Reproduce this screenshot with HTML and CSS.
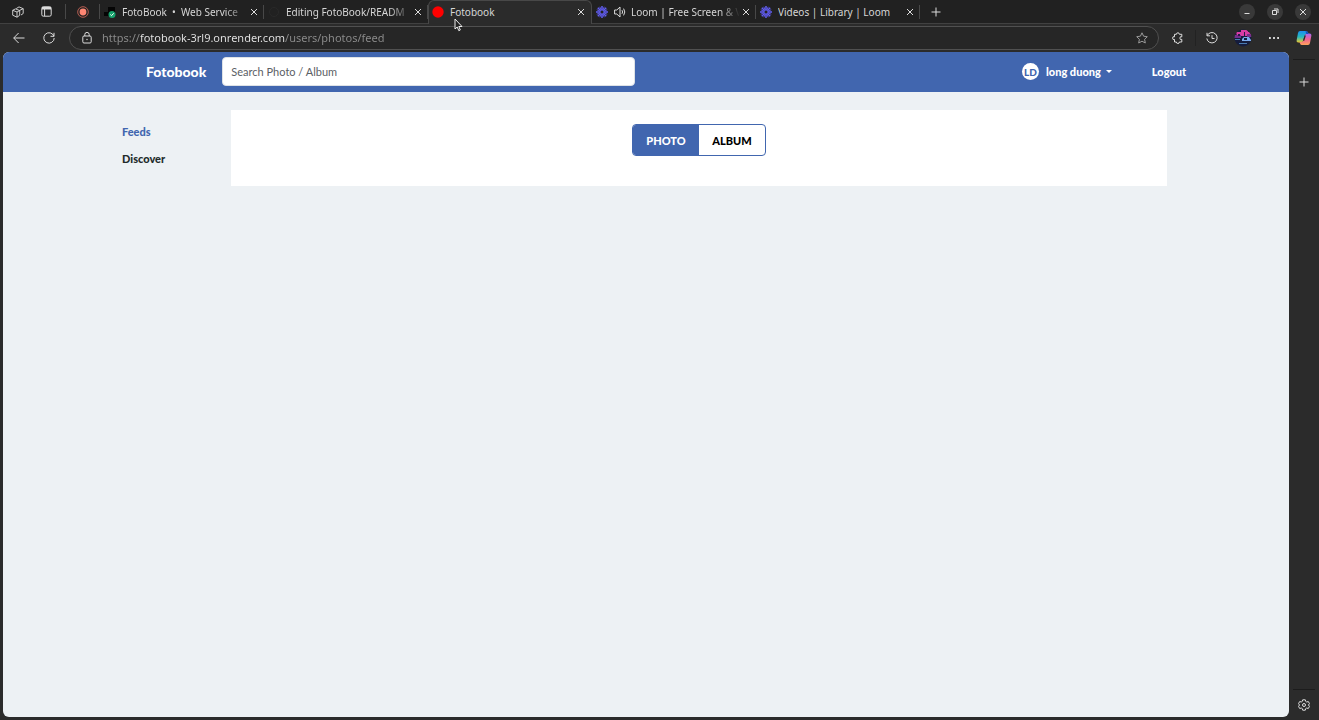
FILE: index.html
```html
<!DOCTYPE html>
<html lang="en">
<head>
<meta charset="utf-8">
<meta name="viewport" content="width=device-width, initial-scale=1">
<title>Fotobook</title>
<link rel="stylesheet" href="styles.css">
</head>
<body>
<svg class="defs" aria-hidden="true">
  <symbol id="close" viewBox="0 0 8 8"><path d="M1 1l6 6M7 1L1 7"/></symbol>
  <symbol id="plus" viewBox="0 0 10 10"><path d="M5 .5v9M.5 5h9"/></symbol>
  <symbol id="loom" viewBox="0 0 12 12">
    <path stroke="#625df5" stroke-width="1.500" d="M6 0v12M0 6h12M1.800 1.800l8.400 8.400M10.200 1.800l-8.400 8.400"/>
    <path stroke="#625df5" stroke-width=".9" d="M3.800.8l4.400 10.400M8.200.8L3.800 11.200M.8 3.800l10.400 4.400M.8 8.200l10.400-4.400"/>
    <circle cx="6" cy="6" r="2" fill="#242424" stroke="#625df5" stroke-width=".8"/>
  </symbol>
</svg>
<div class="browser">
  <header class="tabstrip">
    <div class="tools">
      <button class="icon-btn" aria-label="Workspaces"><svg width="12" height="12" viewBox="0 0 12 12" stroke-width=".9"><path d="M4.200 2.600L7 .9l4.200 1.800v4.800L9 9M.7 4.300l2.700-1.400 4.300 1.600v4.800L5 11.200.7 9.200zM.7 4.300L5 6l2.700-1.500M5 6v5.200M7.500 4.400l3.700-1.700"/></svg></button>
      <button class="icon-btn" aria-label="Tab actions"><svg width="11" height="11" viewBox="0 0 11 11"><rect x=".8" y=".8" width="9.400" height="9.400" rx="1.500"/><path d="M1 2.200h9" stroke-width="2.600"/><path d="M3.600 3v7"/></svg></button>
    </div>
    <button class="pinned" aria-label="Recording"><svg width="12" height="12" viewBox="0 0 12 12"><circle cx="6" cy="6" r="5.300" stroke="#d96c5e" stroke-width=".8"/><circle cx="6" cy="6" r="3.400" fill="#ff8673" stroke="none"/></svg></button>
    <div class="tab">
      <svg class="favicon" width="12" height="12" viewBox="0 0 12 12" stroke="none"><path d="M0 6h4V1h7v6L8 10H0z" fill="#050505"/><circle cx="8" cy="8.500" r="3.500" fill="#15a06b"/><path d="M6.300 8.500l1.200 1.200 2.200-2.400" fill="none" stroke="#fff"/></svg>
      <span class="title fade">FotoBook &nbsp;•&nbsp; Web Service</span>
      <button class="close" aria-label="Close tab"><svg width="8" height="8"><use href="#close"/></svg></button>
    </div>
    <div class="tab">
      <svg class="favicon" width="12" height="12" viewBox="0 0 12 12"><circle cx="6" cy="6" r="4.500" stroke="#292929"/></svg>
      <span class="title fade">Editing FotoBook/READM</span>
      <button class="close" aria-label="Close tab"><svg width="8" height="8"><use href="#close"/></svg></button>
    </div>
    <div class="tab active">
      <svg class="favicon" width="12" height="12" viewBox="0 0 12 12"><circle cx="6" cy="6" r="5.700" fill="red" stroke="none"/></svg>
      <span class="title">Fotobook</span>
      <button class="close" aria-label="Close tab"><svg width="8" height="8"><use href="#close"/></svg></button>
    </div>
    <div class="tab">
      <svg class="favicon" width="12" height="12"><use href="#loom"/></svg>
      <svg class="sound" width="12" height="12" viewBox="0 0 12 12"><path d="M.6 4h2.200L6 1v10L2.800 8H.6zM8 4.200q1.200 1.800 0 3.600M9.600 2.600q2.400 3.400 0 6.800"/></svg>
      <span class="title fade">Loom | Free Screen &amp; V</span>
      <button class="close" aria-label="Close tab"><svg width="8" height="8"><use href="#close"/></svg></button>
    </div>
    <div class="tab">
      <svg class="favicon" width="12" height="12"><use href="#loom"/></svg>
      <span class="title">Videos | Library | Loom</span>
      <button class="close" aria-label="Close tab"><svg width="8" height="8"><use href="#close"/></svg></button>
    </div>
    <button class="new-tab" aria-label="New tab"><svg width="10" height="10"><use href="#plus"/></svg></button>
    <div class="window-buttons">
      <button aria-label="Minimize"><svg width="8" height="8" viewBox="0 0 8 8"><path d="M1.500 5.500h5"/></svg></button>
      <button aria-label="Restore"><svg width="8" height="8" viewBox="0 0 8 8"><path d="M1.500 2.500h4v4h-4zM3 1h4v4"/></svg></button>
      <button aria-label="Close window"><svg width="8" height="8"><use href="#close"/></svg></button>
    </div>
  </header>

  <div class="toolbar">
    <button class="icon-btn" aria-label="Back"><svg width="12" height="12" viewBox="0 0 12 12"><path d="M11.500 6H.8M5.600 1L.7 6l4.900 5"/></svg></button>
    <button class="icon-btn" aria-label="Reload"><svg width="12" height="12" viewBox="0 0 12 12"><path d="M10.900 4.200A5.200 5.200 0 1 0 11.200 6M11 .8v3.500H7.500"/></svg></button>
    <div class="address">
      <svg width="10" height="12" viewBox="0 0 10 12"><rect x=".8" y="4" width="8.400" height="7" rx="1.200"/><path d="M2.800 4V2.600a2.200 2.200 0 0 1 4.400 0V4"/><circle cx="5" cy="7.500" r=".7" fill="#ddd" stroke="none"/></svg>
      <input class="url" type="text" aria-label="Address" value="https://fotobook-3rl9.onrender.com/users/photos/feed">
      <button class="star" aria-label="Add to favorites"><svg width="12" height="12" viewBox="0 0 12 12"><path d="M6 .8l1.600 3.400 3.700.5-2.700 2.600.7 3.700L6 9.200 2.700 11l.7-3.700L.7 4.700l3.700-.5z" stroke="#9a9a9a"/></svg></button>
    </div>
    <div class="actions">
      <button class="icon-btn" aria-label="Extensions"><svg width="12" height="12" viewBox="0 0 12 12"><path d="M2.500 2.300h1.900a1.500 1.500 0 0 1 3 0h2.400v2.500a1.400 1.400 0 1 0 0 2.600V10H7.400a1.500 1.500 0 0 1-3 0H2.500V7.400a1.400 1.400 0 1 1 0-2.600z"/></svg></button>
      <button class="icon-btn history" aria-label="History"><svg width="12" height="12" viewBox="0 0 12 12"><path d="M1.200 3.600A5.200 5.200 0 1 1 .8 6.500M1 .8v3h3M6 3.200v3.300h2.500"/></svg></button>
      <button class="icon-btn" aria-label="Profile"><svg width="18" height="18" viewBox="0 0 18 18" stroke="none"><clipPath id="disc"><circle cx="9" cy="9" r="8.500"/></clipPath><g clip-path="url(#disc)"><path fill="#151c3d" d="M0 0h18v18H0z"/><path fill="#d83ca4" d="M2 3h5V1h7v2h3v4H3z"/><path fill="#762e8d" d="M0 6h7v3H0zM13 5h5v3h-5z"/><path fill="#281a46" d="M4 5h2v2H4zM10 3h1v4h-1z"/><path fill="#7bacef" d="M8 10l2-2h5l2 3v1H8z"/><path fill="#13203f" d="M10 9h3v2h-3z"/><path fill="#497bb1" d="M1 10h5v1H1zM5 14h8v1H5z"/></g></svg></button>
      <button class="icon-btn" aria-label="Settings and more"><svg width="12" height="12" viewBox="0 0 12 12"><path d="M1 6h1.800M5.100 6h1.800M9.200 6H11" stroke-width="1.800"/></svg></button>
      <button class="icon-btn" aria-label="Copilot"><svg width="16" height="16" viewBox="0 0 16 16" stroke="none"><defs><linearGradient id="cool" x1="0" y1="0" x2="0" y2="1"><stop stop-color="#1b8ff0"/><stop offset=".5" stop-color="#25b9c0"/><stop offset="1" stop-color="#edc82d"/></linearGradient><linearGradient id="warm" x1="0" y1="0" x2="0" y2="1"><stop stop-color="#a36af3"/><stop offset=".5" stop-color="#f06292"/><stop offset="1" stop-color="#ffa35a"/></linearGradient></defs><path d="M4 1h6q1.500 0 2 1.500l.5 1.500h-2Q9 4 8.500 6L7 11q-.5 1.500-2 1.500H2.500Q.2 12.500.7 10L2 3Q2.400 1 4 1z" fill="url(#cool)"/><path d="M12 15H6q-1.500 0-2-1.500L3.500 12h2q1.500 0 2-2L9 5q.5-1.500 2-1.500h2.500q2.300 0 1.800 2.500L14 13q-.4 2-2 2z" fill="url(#warm)"/><path d="M9.500 1q2 0 2.500 1.500l.4 1.500h-2.200z" fill="#1750c0"/><path d="M8.600 5.500L7 10.800h1.300L9.900 5.500z" fill="#2b2b2b"/></svg></button>
    </div>
  </div>

  <div class="workspace">
    <div class="page">
      <nav class="navbar">
        <a class="brand" href="#">Fotobook</a>
        <input class="search" type="search" placeholder="Search Photo / Album" aria-label="Search Photo / Album">
        <div class="account">
          <button class="user"><span class="avatar">LD</span>long duong<span class="caret"></span></button>
          <a class="logout" href="#">Logout</a>
        </div>
      </nav>
      <div class="content">
        <nav class="side">
          <a class="current" href="#">Feeds</a>
          <a href="#">Discover</a>
        </nav>
        <main class="card">
          <div class="switch">
            <button class="selected">PHOTO</button>
            <button>ALBUM</button>
          </div>
        </main>
      </div>
    </div>
    <aside class="sidebar">
      <button class="side-add" aria-label="Add to sidebar"><svg width="10" height="10"><use href="#plus"/></svg></button>
      <button class="side-settings" aria-label="Sidebar settings"><svg width="12" height="12" viewBox="0 0 12 12"><path d="M4.700.8h2.600l.4 1.600 1 .6 1.600-.5 1.200 2.200L10.400 6l1.100 1.300-1.200 2.200L8.700 9l-1 .6-.4 1.600H4.700l-.4-1.600-1-.6-1.600.5L.5 7.300 1.600 6 .5 4.700l1.200-2.200 1.600.5 1-.6z"/><circle cx="6" cy="6" r="1.500"/></svg></button>
    </aside>
  </div>
</div>
<svg class="cursor" width="9" height="14" viewBox="0 0 9 14" aria-hidden="true"><path d="M1 1v10l2.200-2 1.600 3.700 1.500-.7-1.500-3.500H8z" fill="#222" stroke="#eee"/></svg>
</body>
</html>
```
FILE: styles.css
```css
* { box-sizing: border-box; }
body {
  margin: 0;
  font-family: "Noto Sans", sans-serif;
  background: #2b2b2b;
}
button, input { font: inherit; color: inherit; }
button {
  display: flex;
  align-items: center;
  justify-content: center;
  padding: 0;
  border: 0;
  background: none;
}
a { text-decoration: none; }
svg { flex: none; fill: none; stroke: #dcdcdc; }
svg[stroke="none"] { stroke: none; }
.defs { position: absolute; width: 0; height: 0; }

.browser { display: flex; flex-direction: column; height: 100vh; }

.tabstrip {
  display: flex;
  height: 24px;
  background: #212121;
  border-bottom: 1px solid #414141;
  color: #d6d6d6;
  font-size: 10px;
}
.tools { display: flex; align-items: center; gap: 17px; width: 65px; padding-left: 12px; }
.pinned {
  width: 35px;
  margin: 4px 0;
  border-left: 1px solid #484848;
  border-right: 1px solid #484848;
}
.tab {
  display: flex;
  align-items: center;
  flex: 0 1 164px;
  min-width: 0;
  padding: 0 4px;
  position: relative;
}
.tab::after {
  content: "";
  position: absolute;
  right: 0;
  top: 5px;
  bottom: 4px;
  border-right: 1px solid #484848;
}
.active {
  margin-bottom: -1px;
  padding: 0 4px 1px 3px;
  background: #2b2b2b;
  border: 1px solid #484848;
  border-bottom: 0;
  border-radius: 6px 6px 0 0;
}
.active::after { display: none; }
.favicon { margin-right: 6px; }
.sound { margin-right: 5px; }
.title { flex: 1; overflow: hidden; white-space: nowrap; line-height: 16px; }
.fade {
  -webkit-mask-image: linear-gradient(90deg, #000 82%, transparent);
  mask-image: linear-gradient(90deg, #000 82%, transparent);
}
.close { flex: none; width: 12px; height: 16px; }
.new-tab { width: 32px; }
.window-buttons { display: flex; align-items: center; gap: 12px; margin-left: auto; padding-right: 8px; }
.window-buttons button { width: 16px; height: 16px; border-radius: 50%; background: #393939; }

.toolbar { display: flex; align-items: center; height: 28px; gap: 18px; padding-left: 13px; }
.address {
  display: flex;
  align-items: center;
  flex: 1;
  min-width: 0;
  height: 24px;
  margin-left: -4px;
  padding: 0 10px 0 12px;
  border: 1px solid #505050;
  border-radius: 12px;
  background: #262626;
}
.url {
  flex: 1;
  min-width: 0;
  height: 20px;
  margin-left: 10px;
  padding: 0 0 2px;
  border: 0;
  font-size: 11px;
  color: transparent;
  background: linear-gradient(90deg, #8d8d8d 38px, #e8e8e8 38px 183px, #8d8d8d 183px);
  -webkit-background-clip: text;
  background-clip: text;
}
.actions { display: flex; align-items: center; gap: 16px; flex: none; margin-left: -5px; padding-right: 7px; }
.history { height: 16px; margin-left: -5px; padding-left: 10px; border-left: 1px solid #222; }

.workspace { display: flex; flex: 1; min-height: 0; }
.page {
  flex: 1;
  min-width: 0;
  margin: 0 0 3px 3px;
  overflow: auto;
  border-radius: 6px;
  background: #edf1f4;
  font-family: Lato, sans-serif;
  font-size: 11px;
}
.navbar {
  display: flex;
  align-items: center;
  height: 40px;
  padding: 0 8% 1px 143px;
  background: #4166af;
  color: #fff;
  font-weight: 900;
}
.brand { margin-right: 16px; color: #fff; font-size: 14px; }
.search {
  flex: 0 1 413px;
  min-width: 0;
  height: 29px;
  padding: 0 8px;
  border: 1px solid #dee2e6;
  border-radius: 4px;
  background: #fff;
  color: #333;
  font-weight: 400;
}
.search::placeholder { color: #5b6065; }
.account { display: flex; align-items: center; gap: 40px; margin-left: auto; }
.user { font-weight: 900; }
.avatar {
  display: grid;
  place-items: center;
  width: 17px;
  height: 17px;
  margin-right: 7px;
  border-radius: 50%;
  background: #fff;
  color: #4166af;
  font-size: 10px;
}
.caret { margin-left: 5px; border: 3px solid transparent; border-top-color: #fff; border-bottom: 0; }
.logout { color: #fff; }

.content { display: flex; align-items: flex-start; padding: 18px 122px 18px 119px; }
.side { display: grid; gap: 11px; width: 109px; padding-top: 14px; line-height: 16px; font-weight: 900; }
.side a { color: #222b2b; }
.side .current { color: #4166af; }
.card { display: flex; justify-content: center; flex: 1; padding: 14px 0 30px; background: #fff; }
.switch { display: flex; overflow: hidden; height: 32px; border: 1px solid #4166af; border-radius: 4px; }
.switch button { width: 66px; color: #000; font-weight: 900; }
.switch .selected { background: #4166af; color: #fff; }

.sidebar { display: flex; flex-direction: column; justify-content: space-between; width: 30px; padding: 7px 4px 0; }
.side-add { height: 44px; border-top: 1px solid #1c1c1c; }
.side-settings { height: 31px; border-top: 1px solid #1c1c1c; }
.cursor { position: absolute; left: 454px; top: 18px; }
```
